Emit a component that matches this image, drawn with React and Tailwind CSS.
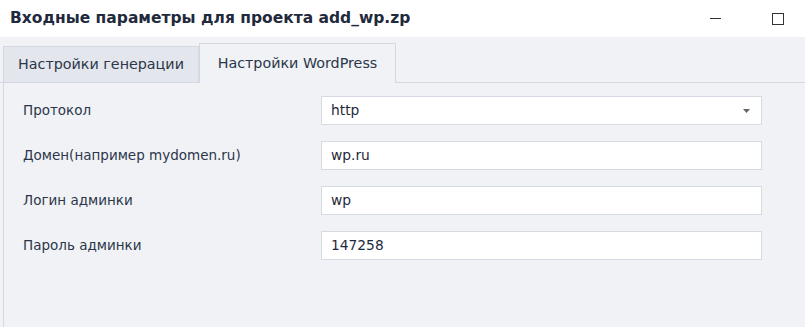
export default function App() {
  const rows = [
    { label: "Протокол", value: "http", select: true },
    { label: "Домен(например mydomen.ru)", value: "wp.ru" },
    { label: "Логин админки", value: "wp" },
    { label: "Пароль админки", value: "147258" },
  ];

  return (
    <div
      className="w-[805px] h-[327px] bg-[#f0f2f6] flex flex-col overflow-hidden"
      style={{ fontFamily: '"DejaVu Sans", sans-serif' }}
    >
      {/* TITLE BAR */}
      <div className="h-[37px] bg-white flex items-center pl-[10px] shrink-0">
        <div className="text-[15.5px] font-bold text-[#1f2a3c]">
          Входные параметры для проекта add_wp.zp
        </div>
        <div className="ml-auto flex items-center">
          <div className="w-[11px] h-[1px] bg-[#333] mr-[51px]" />
          <div className="w-[12px] h-[12px] border-[1.5px] border-[#333] mr-[21px]" />
        </div>
      </div>

      {/* TABS */}
      <div className="flex items-end h-[46px] pl-[3px] border-b border-[#d3d9e2] shrink-0">
        <div className="w-[196px] h-[36px] bg-[#e3e6ec] border border-b-0 border-[#d3d9e2] flex items-center justify-center text-[14.3px] text-[#2c3649]">
          Настройки генерации
        </div>
        <div className="w-[197px] h-[40px] bg-[#f0f2f6] border border-b-0 border-[#d3d9e2] -mb-px flex items-center justify-center text-[14.3px] text-[#2c3649]">
          Настройки WordPress
        </div>
      </div>

      {/* PANEL */}
      <div className="flex-1 ml-[3px] border-l border-[#d3d9e2] pt-[13px] flex flex-col gap-[16px]">
        {rows.map((r) => (
          <div key={r.label} className="flex items-center">
            <div className="w-[317px] pl-[19px] text-[13.5px] text-[#2c3649]">{r.label}</div>
            <div className="w-[441px] h-[29px] bg-white border border-[#d5dae3] flex items-center pl-[9px] text-[13.8px] text-[#1f2a3c]">
              {r.value}
              {r.select && (
                <svg className="ml-auto mr-[11px]" width="7" height="4" viewBox="0 0 7 4">
                  <path d="M0 0h7L3.5 4z" fill="#666" />
                </svg>
              )}
            </div>
          </div>
        ))}
      </div>
    </div>
  );
}
